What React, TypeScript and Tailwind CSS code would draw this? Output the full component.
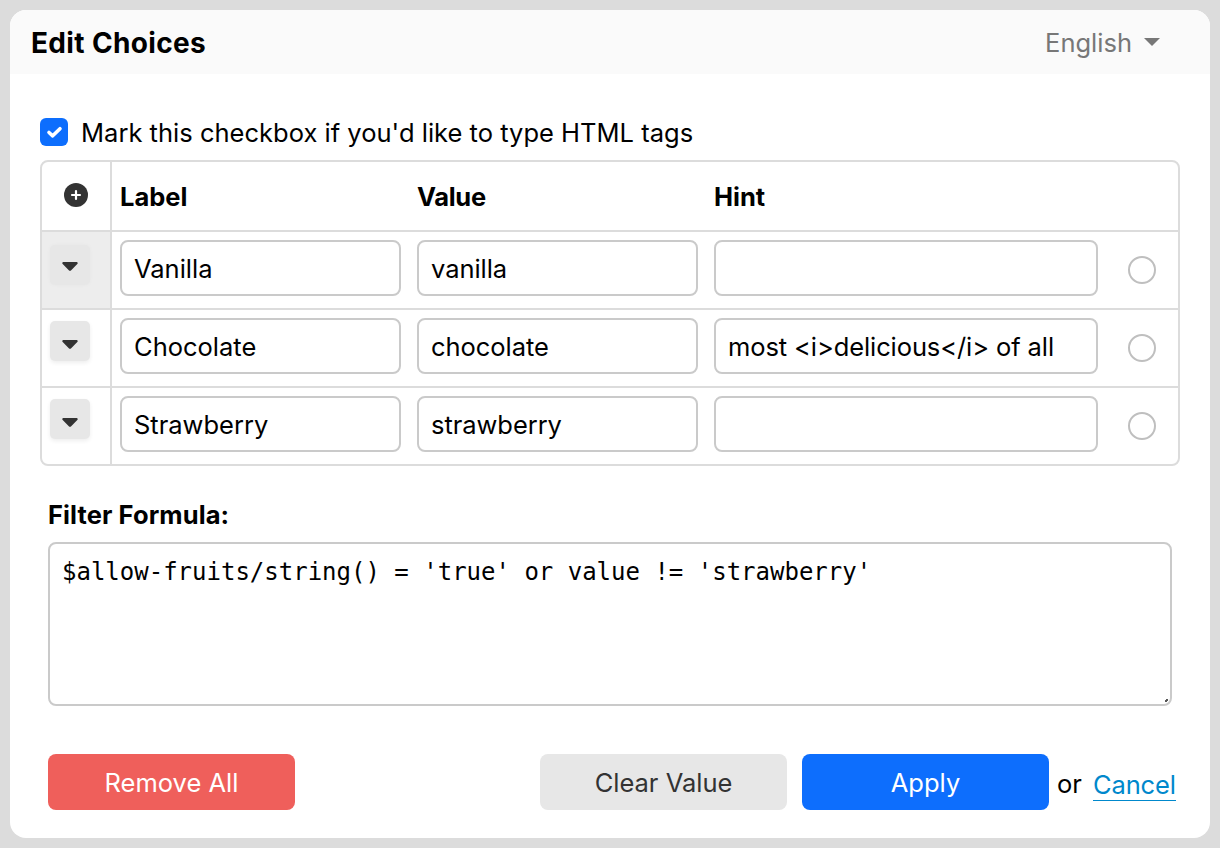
import React from "react";

type Choice = { label: string; value: string; hint: string; active?: boolean };

const choices: Choice[] = [
  { label: "Vanilla", value: "vanilla", hint: "", active: true },
  { label: "Chocolate", value: "chocolate", hint: "most <i>delicious</i> of all" },
  { label: "Strawberry", value: "strawberry", hint: "" },
];

const grid = "grid grid-cols-[70px_297px_297px_400px_1fr]";
const field =
  "h-14 rounded-lg border-2 border-[#cacaca] bg-white px-3 text-[25.5px] text-black outline-none";

function MenuButton({ active }: { active?: boolean }) {
  return (
    <button
      className={
        active
          ? "ml-2 mt-[13px] flex h-10 w-10 justify-center rounded-[5px] bg-[#e7e7e7] pt-[17px] shadow-[0_0_4px_rgba(0,0,0,0.03)]"
          : "ml-2 mt-[11px] flex h-10 w-10 justify-center rounded-[5px] bg-[#e7e7e7] pt-[19px] shadow-[0_2px_4px_rgba(0,0,0,0.07)]"
      }
    >
      <svg width="16" height="10" viewBox="0 0 16 10" fill="#333">
        <path d="M1.600 0h12.800c1.200 0 1.700 1.300.9 2.100L9.200 8.300c-.7.7-1.700.7-2.400 0L.7 2.100C-.1 1.300.4 0 1.600 0z" />
      </svg>
    </button>
  );
}

export default function App() {
  return (
    <div className="h-[848px] w-[1220px] bg-[#dcdcdc] p-2.5 font-['Inter',sans-serif] text-black">
      <div className="flex h-[828px] flex-col overflow-hidden rounded-2xl bg-white">
        <header className="flex h-16 shrink-0 items-center justify-between bg-[#fafafa] pl-[21px] pr-[50px]">
          <h1 className="pt-0.5 text-[28px] font-bold leading-none tracking-[0.35px]">Edit Choices</h1>
          <div className="flex items-center gap-3 text-[25.5px] leading-none text-[#777]">
            <span className="pt-0.5">English</span>
            <svg width="16" height="8" viewBox="0 0 16 8" fill="#777">
              <path d="M0 0h16L8 8z" />
            </svg>
          </div>
        </header>

        <div className="flex flex-col px-[30px] pt-11">
          <label className="flex h-7 items-center">
            <span className="flex h-7 w-7 items-center justify-center rounded-md bg-[#0d6efd]">
              <svg width="28" height="28" viewBox="0 0 28 28" fill="none" stroke="#fff" strokeWidth="3.600" strokeLinecap="round" strokeLinejoin="round">
                <path d="M9 14.500L12.700 17.800L20 10.700" />
              </svg>
            </span>
            <span className="ml-[13px] whitespace-nowrap pt-0.5 text-[25.5px] leading-none tracking-[0.015px]">
              Mark this checkbox if you'd like to type HTML tags
            </span>
          </label>

          <div className="mt-3.5 flex h-[306px] flex-col divide-y-2 divide-[#dcdcdc] overflow-hidden rounded-lg border-2 border-[#dcdcdc]">
            <div className={`${grid} h-[70px] text-[25.5px] font-bold`}>
              <div className="flex items-center justify-center border-r-2 border-[#dcdcdc] pb-0.5">
                <svg width="24" height="24" viewBox="0 0 24 24">
                  <circle cx="12" cy="12" r="12" fill="#333" />
                  <path d="M12 8v8M8 12h8" stroke="#fff" strokeWidth="2.200" strokeLinecap="round" />
                </svg>
              </div>
              <div className="flex items-center pl-2 pt-0.5">Label</div>
              <div className="flex items-center pl-2 pt-0.5 tracking-[-0.3px]">Value</div>
              <div className="flex items-center pl-2 pt-0.5">Hint</div>
            </div>
            {choices.map((c) => (
              <div key={c.value} className={`${grid} h-[78px] last:h-[76px]`}>
                <div className={c.active ? "border-r-2 border-[#dcdcdc] bg-[#ededed]" : "border-r-2 border-[#dcdcdc]"}>
                  <MenuButton active={c.active} />
                </div>
                <div className="pl-2 pt-2">
                  <input className={`${field} w-[281px]`} defaultValue={c.label} />
                </div>
                <div className="pl-2 pt-2">
                  <input className={`${field} w-[281px] tracking-[-0.05px]`} defaultValue={c.value} />
                </div>
                <div className="pl-2 pt-2">
                  <input className={`${field} w-96 tracking-[-0.1px]`} defaultValue={c.hint} />
                </div>
                <div className="pl-[22px] pt-6">
                  <div className="h-7 w-7 rounded-full border-2 border-[#bfbfbf]" />
                </div>
              </div>
            ))}
          </div>

          <div className="mt-[33px] pl-2 text-[25.5px] font-bold leading-[32px] tracking-[0.1px]">Filter Formula:</div>
          <div className="relative mx-2 mt-[11px] h-[164px]">
            <textarea
              className="block h-full w-full resize-none rounded-lg border-2 border-[#cacaca] px-3 py-3 font-['DejaVu_Sans_Mono',monospace] text-[24px] leading-[32px] text-black outline-none"
              defaultValue="$allow-fruits/string() = 'true' or value != 'strawberry'"
            />
            <svg className="absolute bottom-[2px] right-[2px]" width="6" height="6" viewBox="0 0 6 6">
              <path d="M2 1h2v2h-1v1h-2v-2h1z" fill="#555" />
            </svg>
          </div>

          <div className="mt-12 flex h-14 items-center pl-2 text-[25.5px]">
            <button className="h-14 w-[247px] rounded-lg bg-[#ef5f5b] pt-0.5 text-white">Remove All</button>
            <button className="ml-[245px] h-14 w-[247px] rounded-lg bg-[#e7e7e7] pt-0.5 text-[#333]">Clear Value</button>
            <button className="ml-[15px] h-14 w-[247px] rounded-lg bg-[#0d6efd] pt-0.5 text-white">Apply</button>
            <span className="ml-2 pt-1 leading-none">or</span>
            <a className="ml-[11px] mt-[7px] border-b border-[#0088cc] pb-px pt-px leading-[28px] tracking-[-0.1px] text-[#0088cc]">Cancel</a>
          </div>
        </div>
      </div>
    </div>
  );
}
